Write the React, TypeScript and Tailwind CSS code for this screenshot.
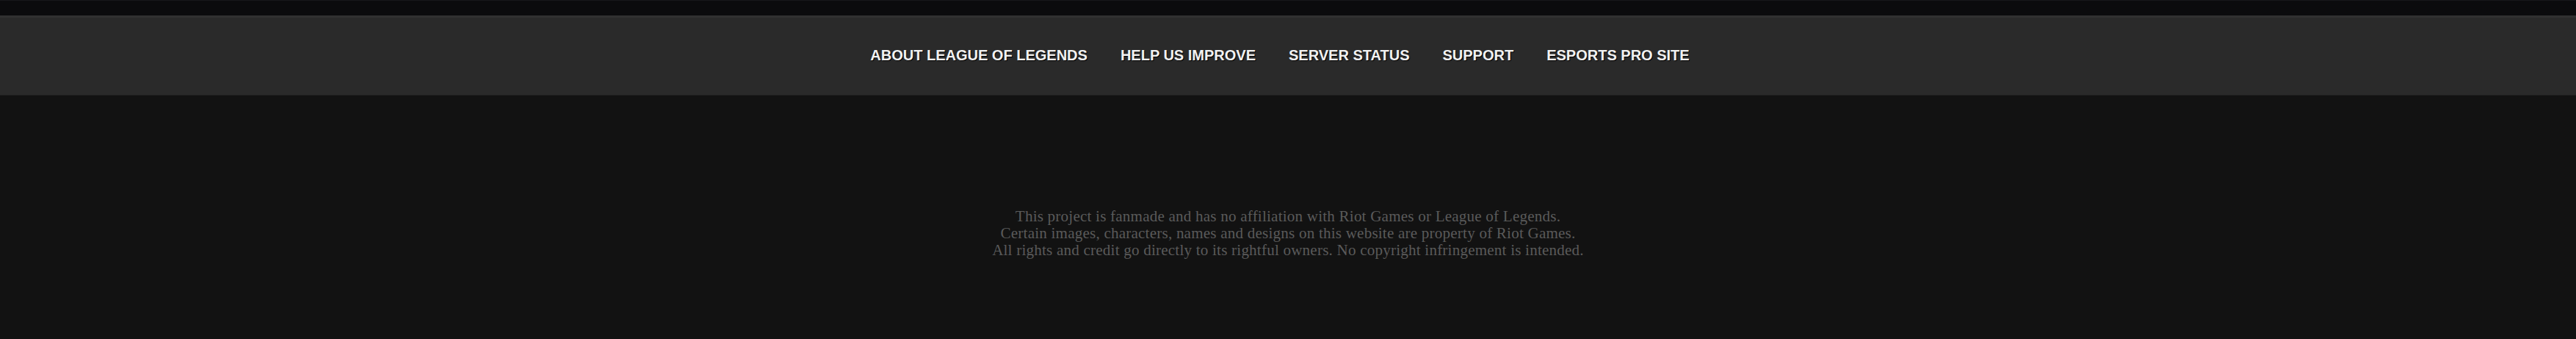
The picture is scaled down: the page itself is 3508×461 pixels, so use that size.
const navLinks = [
  { name: "About League of Legends", href: "#" },
  { name: "Help Us Improve", href: "#" },
  { name: "Server Status", href: "#" },
  { name: "Support", href: "#" },
  { name: "Esports Pro Site", href: "#" },
];

export default function App() {
  return (
    <div className="min-h-screen bg-[#121212] flex flex-col">
      {/* thin top strip */}
      <div className="h-[21px] bg-[#0b0b0d] border-t border-[#17171a]" />

      <nav className="h-[109px] bg-[#2a2a2a] border-t-[3px] border-t-[#313131] border-b border-b-[#1e1e1e] flex items-center justify-center gap-[45px] pr-[22px] pb-[3px]">
        {navLinks.map((link) => (
          <a
            key={link.name}
            href={link.href}
            className="font-['Liberation_Sans',Arial,sans-serif] font-bold text-[20px] leading-none uppercase text-[#f2f2f2] [text-shadow:1px_1px_0_#000]"
          >
            {link.name}
          </a>
        ))}
      </nav>

      <footer className="pt-[153px] text-center font-['Liberation_Serif','Times_New_Roman',serif] text-[21px] tracking-[0.24px] leading-[23px] text-[#5a5a5a]">
        <p>This project is fanmade and has no affiliation with Riot Games or League of Legends.</p>
        <p>Certain images, characters, names and designs on this website are property of Riot Games.</p>
        <p>All rights and credit go directly to its rightful owners. No copyright infringement is intended.</p>
      </footer>
    </div>
  );
}
